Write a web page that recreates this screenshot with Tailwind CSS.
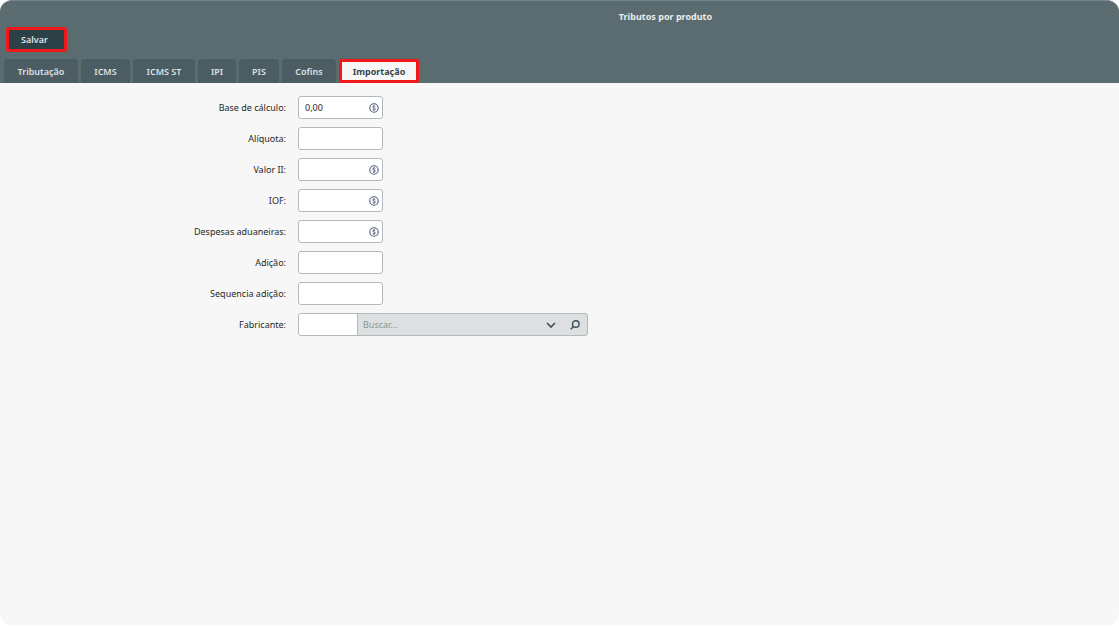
<!DOCTYPE html>
<html lang="pt-BR">
<head>
<meta charset="utf-8">
<meta name="viewport" content="width=device-width, initial-scale=1">
<title>Tributos por produto</title>
<script src="https://cdn.jsdelivr.net/npm/@tailwindcss/browser@4"></script>
</head>
<body class="bg-white font-['Noto_Sans',sans-serif] text-[9px] leading-4 text-[#25292b]">
<svg class="hidden" aria-hidden="true">
  <symbol id="coin" viewBox="0 0 10 10"><circle cx="5" cy="5" r="4.2" fill="none" stroke="#4d5878" stroke-width="1.1"/><path d="M6.3 3.7C6 3.2 5.5 3.1 5 3.1c-.8 0-1.3.4-1.3.9 0 1.3 2.6.7 2.6 2 0 .6-.5.9-1.3.9-.6 0-1.1-.2-1.4-.7M5 2.3v.8M5 6.9v.8" fill="none" stroke="#4d5878" stroke-width="1"/></symbol>
</svg>
<div class="flex min-h-screen flex-col pb-px">
  <header class="rounded-t-xl border-t border-[#73858a] bg-[#5b6c70]">
    <h1 class="pl-[212px] pt-2 text-center font-bold text-[#e9eced]">Tributos por produto</h1>
    <div class="pl-[6px] pt-[2px]">
      <button type="button" class="block h-[25px] w-[61px] rounded-[3px] border-[3px] border-[#f01818] bg-[#2c4147] pr-[4px] font-semibold text-[#dfe4e5]">Salvar</button>
    </div>
    <nav class="flex gap-[3px] px-1 pt-[7px] font-semibold text-[#dce1e2]" role="tablist">
      <button type="button" role="tab" class="h-6 w-[74px] rounded-t bg-[#4b5c62] pt-[2px]">Tributação</button>
      <button type="button" role="tab" class="h-6 w-[49px] rounded-t bg-[#4b5c62] pt-[2px]">ICMS</button>
      <button type="button" role="tab" class="h-6 w-[62px] rounded-t bg-[#4b5c62] pt-[2px]">ICMS ST</button>
      <button type="button" role="tab" class="h-6 w-[38px] rounded-t bg-[#4b5c62] pt-[2px]">IPI</button>
      <button type="button" role="tab" class="h-6 w-[40px] rounded-t bg-[#4b5c62] pt-[2px]">PIS</button>
      <button type="button" role="tab" class="h-6 w-[54px] rounded-t bg-[#4b5c62] pt-[2px]">Cofins</button>
      <button type="button" role="tab" aria-selected="true" class="h-6 w-[80px] rounded-[2px] border-[3px] border-[#f01818] bg-[#f7f7f7] pt-[2px] font-bold text-[#35464b]">Importação</button>
    </nav>
  </header>
  <main class="grow rounded-b-xl bg-[#f7f7f7] pt-[13px]">
    <form class="grid grid-cols-[286px_1fr] items-center gap-x-3 gap-y-2 text-right">
      <label for="base">Base de cálculo:</label>
      <div class="flex h-[23px] w-[85px] items-center rounded-[3px] border border-[#b0babd] bg-white pl-[6px] pr-[3px]"><input id="base" value="0,00" class="w-0 grow outline-none"><svg class="size-[10px]"><use href="#coin"/></svg></div>
      <label for="aliq">Alíquota:</label>
      <input id="aliq" class="h-[23px] w-[85px] rounded-[3px] border border-[#b0babd] bg-white px-[6px] outline-none">
      <label for="valor">Valor II:</label>
      <div class="flex h-[23px] w-[85px] items-center rounded-[3px] border border-[#b0babd] bg-white pl-[6px] pr-[3px]"><input id="valor" class="w-0 grow outline-none"><svg class="size-[10px]"><use href="#coin"/></svg></div>
      <label for="iof">IOF:</label>
      <div class="flex h-[23px] w-[85px] items-center rounded-[3px] border border-[#b0babd] bg-white pl-[6px] pr-[3px]"><input id="iof" class="w-0 grow outline-none"><svg class="size-[10px]"><use href="#coin"/></svg></div>
      <label for="desp">Despesas aduaneiras:</label>
      <div class="flex h-[23px] w-[85px] items-center rounded-[3px] border border-[#b0babd] bg-white pl-[6px] pr-[3px]"><input id="desp" class="w-0 grow outline-none"><svg class="size-[10px]"><use href="#coin"/></svg></div>
      <label for="adic">Adição:</label>
      <input id="adic" class="h-[23px] w-[85px] rounded-[3px] border border-[#b0babd] bg-white px-[6px] outline-none">
      <label for="seq">Sequencia adição:</label>
      <input id="seq" class="h-[23px] w-[85px] rounded-[3px] border border-[#b0babd] bg-white px-[6px] outline-none">
      <label for="fab">Fabricante:</label>
      <div class="flex h-[23px] w-[290px] overflow-hidden rounded-[3px] border border-[#b0babd] bg-[#dce0e1]">
        <input id="fab" class="w-[59px] border-r border-[#b0babd] bg-white px-[6px] outline-none">
        <input aria-label="Buscar fabricante" placeholder="Buscar..." class="w-0 grow px-[5px] outline-none placeholder:text-[#8b9496]">
        <button type="button" aria-label="Abrir lista" class="flex w-6 items-center justify-center"><svg class="h-[6px] w-[10px]" viewBox="0 0 10 6" fill="none" stroke="#3d4d52" stroke-width="1.6"><path d="M1 1l4 4 4-4"/></svg></button>
        <button type="button" aria-label="Pesquisar" class="flex w-6 items-center justify-center"><svg class="size-[10px]" viewBox="0 0 10 10" fill="none" stroke="#3d4d52" stroke-width="1.4"><circle cx="5.8" cy="4" r="3.3"/><path d="M3.5 6.4L.7 9.3"/></svg></button>
      </div>
    </form>
  </main>
</div>
</body>
</html>
